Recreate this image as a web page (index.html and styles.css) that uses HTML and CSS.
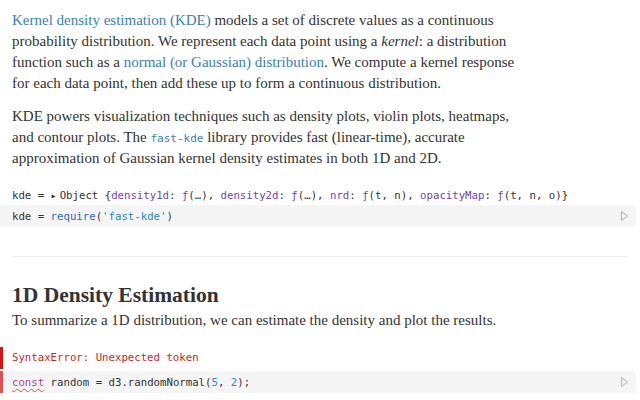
FILE: index.html
```
<!DOCTYPE html>
<html>
<head>
<meta charset="utf-8">
<link rel="stylesheet" href="styles.css">
</head>
<body>
<div class="nb">
  <p class="para"><a class="link">Kernel density estimation (KDE)</a> models a set of discrete values as a continuous<br>probability distribution. We represent each data point using a <em>kernel</em>: a distribution<br>function such as a <a class="link">normal (or Gaussian) distribution</a>. We compute a kernel response<br>for each data point, then add these up to form a continuous distribution.</p>
  <p class="para p2">KDE powers visualization techniques such as density plots, violin plots, heatmaps,<br>and contour plots. The <code class="icode">fast-kde</code> library provides fast (linear-time), accurate<br>approximation of Gaussian kernel density estimates in both 1D and 2D.</p>
  <div class="out">kde = <span class="tri">▸</span>Object {<span class="key">density1d</span>: <span class="fn">ƒ</span>(…), <span class="key">density2d</span>: <span class="fn">ƒ</span>(…), <span class="key">nrd</span>: <span class="fn">ƒ</span>(t, n), <span class="key">opacityMap</span>: <span class="fn">ƒ</span>(t, n, o)}</div>
  <div class="cell"><span class="src">kde = <span class="call">require</span>(<span class="str">'fast-kde'</span>)</span><svg class="run" width="9" height="12" viewBox="0 0 9 12"><path d="M1.5 1.5 L7.5 6 L1.5 10.5 Z" fill="none" stroke="#c4c4c4" stroke-width="1.3" stroke-linejoin="round"/></svg></div>
  <hr class="rule">
  <h2 class="h2">1D Density Estimation</h2>
  <p class="para p3">To summarize a 1D distribution, we can estimate the density and plot the results.</p>
  <div class="err">SyntaxError: Unexpected token</div>
  <div class="cell errcell"><span class="src"><span class="kw">const</span> random = d3.randomNormal(<span class="num">5</span>, <span class="num">2</span>);</span><svg class="run" width="9" height="12" viewBox="0 0 9 12"><path d="M1.5 1.5 L7.5 6 L1.5 10.5 Z" fill="none" stroke="#c4c4c4" stroke-width="1.3" stroke-linejoin="round"/></svg></div>
</div>
</body>
</html>
```
FILE: styles.css
```
html, body {
  margin: 0;
  padding: 0;
  background: #fff;
}
.nb {
  padding-top: 10px;
  color: #333;
  font-family: "Liberation Serif", serif;
}
.para {
  margin: 0 0 0 12px;
  font-size: 15px;
  line-height: 21px;
  white-space: nowrap;
}
.p2 {
  margin-top: 12px;
}
.link {
  color: #3b80b9;
  text-decoration: none;
}
.icode {
  font-family: "DejaVu Sans Mono", monospace;
  font-size: 11px;
  line-height: 1;
  color: #3b80b9;
}
.out, .src, .err {
  font-family: "DejaVu Sans Mono", monospace;
  font-size: 10.7px;
  white-space: nowrap;
}
.out {
  margin: 18px 0 0 12px;
  line-height: 18px;
  color: #333;
}
.tri {
  font-size: 10px;
  margin-right: 3px;
}
.key { color: #6f42c1; }
.fn { color: #6f42c1; }
.cell {
  display: flex;
  align-items: center;
  justify-content: space-between;
  height: 22px;
  margin-right: 4px;
  margin-top: 0;
  background: #f5f5f5;
  border-radius: 0 4px 4px 0;
  padding: 0 7px 0 12px;
}
.src { color: #333; }
.call { color: #2a6ea8; }
.str { color: #2a8ab8; }
.num { color: #2a8ab8; }
.kw {
  color: #a84a8a;
  text-decoration: underline wavy #e05050;
  text-decoration-thickness: 1px;
  text-underline-offset: 2px;
}
.rule {
  margin: 29px 12px 0 12px;
  border: 0;
  border-top: 1px solid #eee;
  height: 0;
}
.h2 {
  margin: 24px 0 0 12px;
  font-size: 21.5px;
  line-height: 28px;
  font-weight: bold;
  color: #333;
}
.p3 {
  margin-top: 1px;
}
.err {
  margin-top: 16px;
  height: 22px;
  line-height: 22px;
  color: #d01c1c;
  border-left: 3px solid #e01010;
  padding-left: 9px;
}
.errcell {
  margin-top: 2px;
  border-left: 3px solid #e05050;
  padding-left: 9px;
}
```
